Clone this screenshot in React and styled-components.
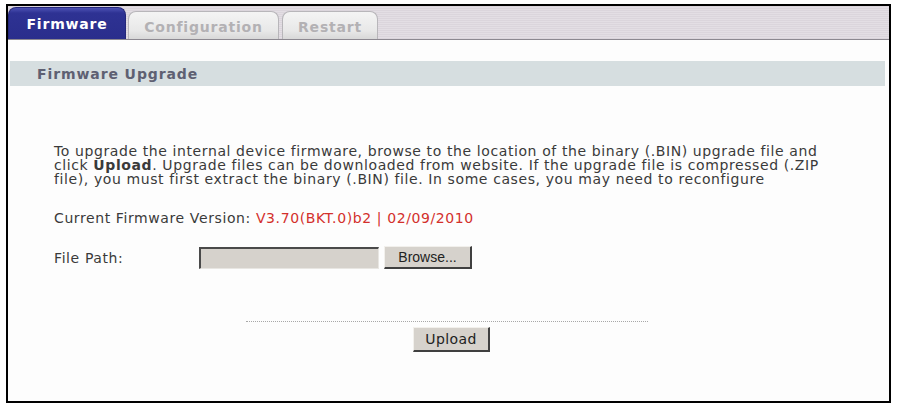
import React from "react";
import styled, { createGlobalStyle } from "styled-components";

const GlobalStyle = createGlobalStyle`
  body {
    margin: 0;
    background: #ffffff;
    font-family: "DejaVu Sans", Verdana, sans-serif;
  }
`;

const Frame = styled.div`
  margin: 4px 0 0 6px;
  width: 885px;
  height: 399px;
  box-sizing: border-box;
  border: 2px solid #000;
  background: #fdfdfd;
  display: flex;
  flex-direction: column;
`;

const TabBar = styled.div`
  height: 34px;
  box-sizing: border-box;
  display: flex;
  align-items: flex-end;
  gap: 2px;
  border-bottom: 1px solid #8c8890;
  background: repeating-linear-gradient(
    to bottom,
    #dbd5dc 0px,
    #dbd5dc 1px,
    #e3dee4 1px,
    #e3dee4 2px
  );
`;

const Tab = styled.div`
  width: ${(p) => p.$width}px;
  height: ${(p) => (p.$active ? 32 : 28)}px;
  box-sizing: border-box;
  display: flex;
  align-items: center;
  justify-content: center;
  padding-top: ${(p) => (p.$active ? 0 : 2)}px;
  font-size: 14px;
  font-weight: bold;
  letter-spacing: 0.8px;
  border-radius: 8px 8px 0 0;
  color: ${(p) => (p.$active ? "#ffffff" : "#b3b1b4")};
  background: ${(p) =>
    p.$active
      ? "linear-gradient(to bottom, #4d52b4 0px, #2e3293 5px, #2a2e8c 100%)"
      : "linear-gradient(to bottom, #f4f4f4 0%, #e8e8e8 70%, #d8d8d8 100%)"};
  border: 1px solid ${(p) => (p.$active ? "#24277a" : "#b8b6ba")};
  border-bottom: none;
  margin-left: ${(p) => p.$offset || 0}px;
`;

const Body = styled.div`
  flex: 1;
  display: flex;
  flex-direction: column;
  padding: 21px 4px 0 2px;
`;

const SectionHeader = styled.div`
  height: 25px;
  background: #d6dee0;
  display: flex;
  align-items: center;
  padding-left: 27px;
  font-size: 14px;
  font-weight: bold;
  letter-spacing: 0.9px;
  color: #5e6072;
`;

const Content = styled.div`
  padding: 58px 0 0 44px;
  display: flex;
  flex-direction: column;
  font-size: 14px;
  letter-spacing: 0.6px;
  color: #3a3a3a;
`;

const Paragraph = styled.p`
  margin: 0;
  white-space: nowrap;
  line-height: 14px;
`;

const VersionLine = styled.div`
  margin-top: 25px;
  line-height: 14px;
`;

const Red = styled.span`
  color: #d3302c;
`;

const PathRow = styled.div`
  margin-top: 21px;
  display: flex;
  align-items: center;
`;

const Label = styled.span`
  width: 145px;
`;

const PathInput = styled.div`
  width: 180px;
  height: 22px;
  box-sizing: border-box;
  background: #d6d2cc;
  border-top: 2px solid #4a4a4a;
  border-left: 2px solid #4a4a4a;
  border-right: 1px solid #e8e6e2;
  border-bottom: 1px solid #e8e6e2;
`;

const Button = styled.button`
  height: ${(p) => p.$h}px;
  width: ${(p) => p.$w}px;
  padding: 0;
  margin-left: ${(p) => p.$ml || 0}px;
  box-sizing: border-box;
  background: #d6d2cc;
  border-top: 1px solid #f2f0ec;
  border-left: 1px solid #f2f0ec;
  border-right: 2px solid #404040;
  border-bottom: 2px solid #404040;
  color: #222;
  font-family: ${(p) => p.$font};
  font-size: ${(p) => p.$size}px;
  letter-spacing: ${(p) => p.$ls}px;
`;

const Footer = styled.div`
  margin-top: 52px;
  display: flex;
  flex-direction: column;
  align-items: center;
  padding-right: 2px;
`;

const Dotted = styled.div`
  width: 402px;
  border-top: 1px dotted #a8a8a8;
  margin-bottom: 5px;
`;

export default function App() {
  return (
    <>
      <GlobalStyle />
      <Frame>
        <TabBar>
          <Tab $active $width={118}>Firmware</Tab>
          <Tab $width={151}>Configuration</Tab>
          <Tab $width={96} $offset={1}>Restart</Tab>
        </TabBar>
        <Body>
          <SectionHeader>Firmware Upgrade</SectionHeader>
          <Content>
            <Paragraph>
              To upgrade the internal device firmware, browse to the location of the binary (.BIN) upgrade file and
              <br />
              click <b>Upload</b>. Upgrade files can be downloaded from website. If the upgrade file is compressed (.ZIP
              <br />
              file), you must first extract the binary (.BIN) file. In some cases, you may need to reconfigure
            </Paragraph>
            <VersionLine>
              Current Firmware Version: <Red>V3.70(BKT.0)b2 | 02/09/2010</Red>
            </VersionLine>
            <PathRow>
              <Label>File Path:</Label>
              <PathInput />
              <Button $w={88} $h={23} $ml={5} $font={'"Liberation Sans", Arial, sans-serif'} $size={14} $ls={0}>
                Browse...
              </Button>
            </PathRow>
          </Content>
          <Footer>
            <Dotted />
            <Button $w={77} $h={25} $ml={10} $font={'"DejaVu Sans", Tahoma, sans-serif'} $size={14} $ls={0.4}>
              Upload
            </Button>
          </Footer>
        </Body>
      </Frame>
    </>
  );
}
